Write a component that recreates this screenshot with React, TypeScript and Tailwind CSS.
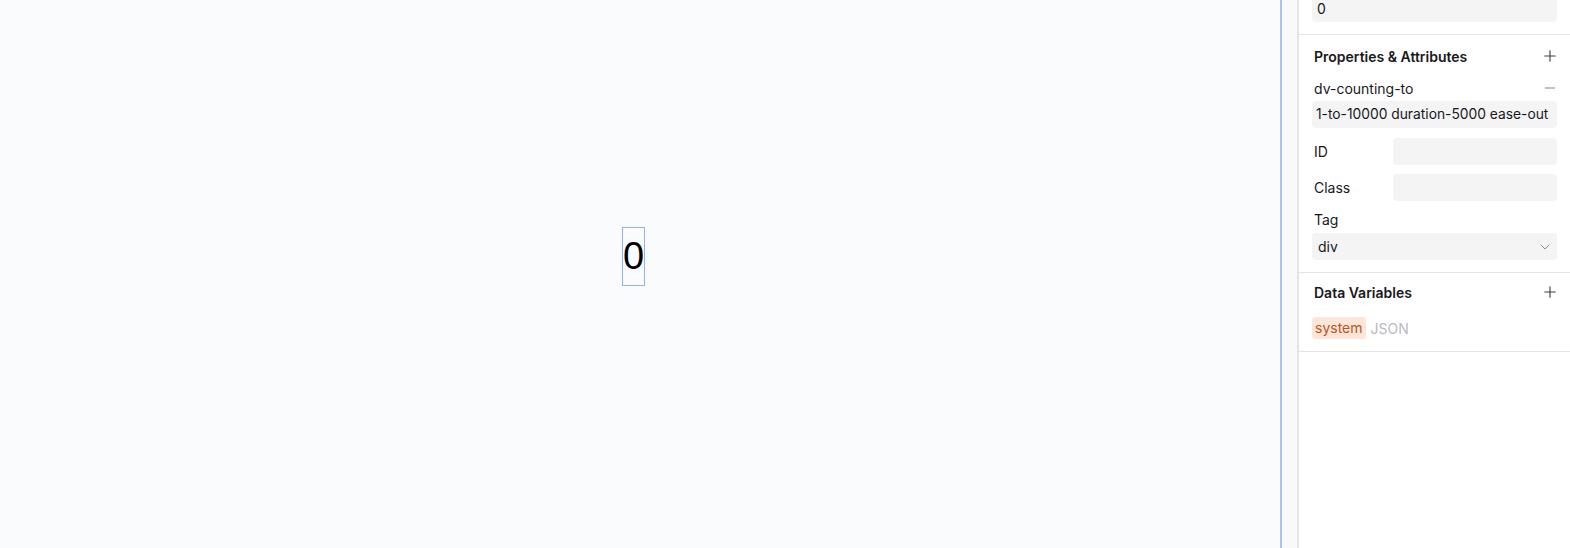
import { Plus, Minus, ChevronDown } from 'lucide-react';

function Field({ label }: { label: string }) {
  return (
    <div className="flex items-center h-[27px]">
      <span className="w-[81px] pl-[2px]">{label}</span>
      <div className="flex-1 h-[27px] rounded bg-[#f4f4f5]" />
    </div>
  );
}

export default function App() {
  return (
    <main className="flex h-[548px] w-[1570px] overflow-hidden font-['Inter',sans-serif] text-[14px] text-[#18181b]">
      <section className="flex-1 bg-[#fafbfd] flex items-center justify-center">
        <div className="-mt-[35px] -ml-[13px] border border-[#8fb3f2] font-['Liberation_Sans',sans-serif] text-[38px] leading-[57px] text-black">
          0
        </div>
      </section>
      <div className="w-[2px] bg-[#a9c3f5]" />
      <div className="w-[17px] bg-[#f9f9fb] border-r-[2px] border-[#e4e4e7]" />
      <aside className="w-[271px] bg-white">
        <div className="border-b border-[#e4e4e7] pl-[13px] pr-[13px] pb-[12px]">
          <div className="h-[22px] rounded-b bg-[#f4f4f5] px-[5px] leading-[18px]">0</div>
        </div>

        <div className="border-b border-[#e4e4e7] pl-[13px] pr-[13px] pt-[11px] pb-[12px]">
          <div className="flex items-center justify-between h-[20px] pl-[2px]">
            <span className="font-semibold">Properties &amp; Attributes</span>
            <Plus size={18} strokeWidth={1.5} className="text-[#3f3f46] -mr-[2px]" />
          </div>
          <div className="mt-[13px] flex items-center justify-between h-[18px] pl-[2px]">
            <span>dv-counting-to</span>
            <Minus size={16} strokeWidth={1.3} className="text-[#71717a] -mr-[1px]" />
          </div>
          <div className="mt-[4px] h-[27px] rounded bg-[#f4f4f5] px-[4px] text-[13.8px] leading-[27px] whitespace-nowrap overflow-hidden">
            1-to-10000 duration-5000 ease-out
          </div>
          <div className="mt-[10px] flex flex-col gap-[9px]">
            <Field label="ID" />
            <Field label="Class" />
          </div>
          <div className="mt-[9px] pl-[2px] h-[19px] leading-[19px]">Tag</div>
          <div className="mt-[4px] h-[27px] rounded bg-[#f4f4f5] pl-[6px] pr-[4px] flex items-center justify-between">
            <span>div</span>
            <ChevronDown size={16} strokeWidth={1.2} className="text-[#71717a]" />
          </div>
        </div>

        <div className="border-b border-[#e4e4e7] pl-[13px] pr-[13px] pt-[9px] pb-[12px]">
          <div className="flex items-center justify-between h-[20px] pl-[2px]">
            <span className="font-semibold">Data Variables</span>
            <Plus size={18} strokeWidth={1.5} className="text-[#3f3f46] -mr-[2px]" />
          </div>
          <div className="mt-[15px] flex items-center gap-[5px] h-[22px]">
            <span className="rounded bg-[#fde6d8] px-[3px] leading-[22px] text-[#b8541f]">system</span>
            <span className="text-[#b9b9bd]">JSON</span>
          </div>
        </div>
      </aside>
    </main>
  );
}
